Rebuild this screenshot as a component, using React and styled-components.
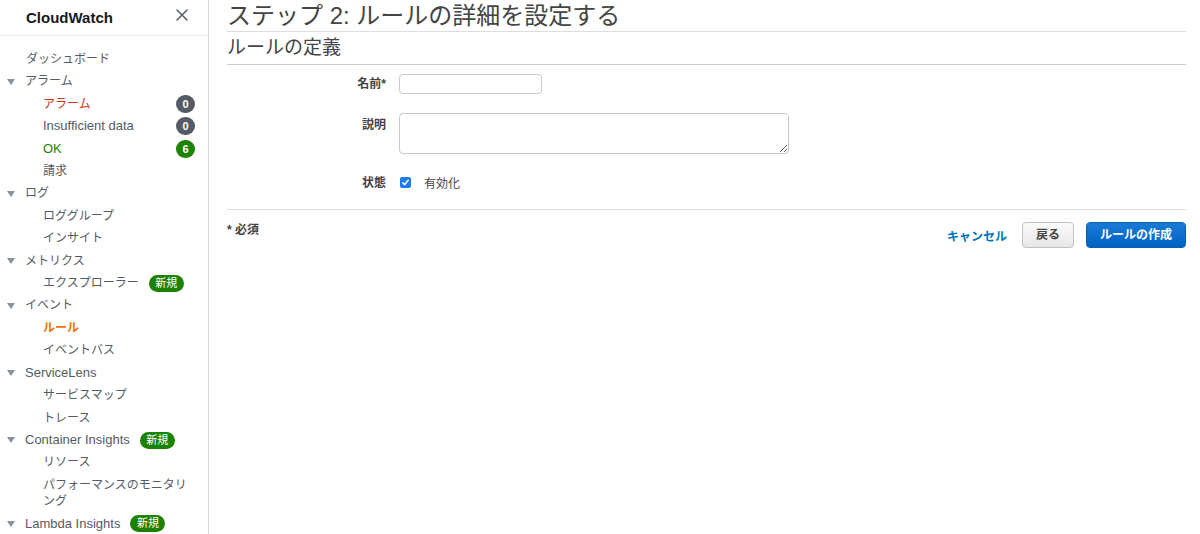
import styled, { createGlobalStyle } from "styled-components";

const GlobalStyle = createGlobalStyle`
  body {
    margin: 0;
    font-family: "Liberation Sans", "Noto Sans CJK JP", sans-serif;
    background: #fff;
  }
  * { box-sizing: border-box; }
`;

const tones = {
    default: "#545b64",
    red: "#d13212",
    green: "#1d8102",
    orange: "#ec7211",
};

const navItems = [
    { label: "ダッシュボード", indent: 26 },
    { label: "アラーム", group: true },
    { label: "アラーム", indent: 43, tone: "red", count: 0 },
    { label: "Insufficient data", indent: 43, latin: true, count: 0 },
    { label: "OK", indent: 43, latin: true, tone: "green", count: 6, countTone: "green" },
    { label: "請求", indent: 43 },
    { label: "ログ", group: true },
    { label: "ロググループ", indent: 43 },
    { label: "インサイト", indent: 43 },
    { label: "メトリクス", group: true },
    { label: "エクスプローラー", indent: 43, isNew: true },
    { label: "イベント", group: true },
    { label: "ルール", indent: 43, tone: "orange", bold: true },
    { label: "イベントバス", indent: 43 },
    { label: "ServiceLens", group: true, latin: true },
    { label: "サービスマップ", indent: 43 },
    { label: "トレース", indent: 43 },
    { label: "Container Insights", group: true, latin: true, isNew: true },
    { label: "リソース", indent: 43 },
    { label: "パフォーマンスのモニタリング", indent: 43 },
    { label: "Lambda Insights", group: true, latin: true, isNew: true },
];

function CloseIcon () {
    return (
        <svg width="12" height="12" viewBox="0 0 12 12">
            <path d="M1 1 L11 11 M11 1 L1 11" stroke="#545b64" strokeWidth="1.5" strokeLinecap="round" />
        </svg>
    );
}

function CheckIcon () {
    return (
        <svg width="9" height="9" viewBox="0 0 9 9">
            <path d="M1.8 4.8 L3.7 6.6 L7.2 2.3" stroke="#fff" strokeWidth="1.5" fill="none" strokeLinecap="round" strokeLinejoin="round" />
        </svg>
    );
}

function App () {
    return (
        <Layout>
            <GlobalStyle />
            <Sidebar>
                <SidebarHeader>
                    <Brand>CloudWatch</Brand>
                    <CloseButton><CloseIcon /></CloseButton>
                </SidebarHeader>
                <NavList>
                    { navItems.map( ( item, i ) => (
                        <NavRow key={ i } $indent={ item.group ? 7 : item.indent }>
                            { item.group && <Caret /> }
                            <NavLabel
                                $tone={ item.tone || "default" }
                                $latin={ item.latin }
                                $bold={ item.bold }
                            >
                                { item.label }
                            </NavLabel>
                            { item.isNew && <NewBadge>新規</NewBadge> }
                            { item.count !== undefined && (
                                <CountBadge $tone={ item.countTone || "dark" }>{ item.count }</CountBadge>
                            ) }
                        </NavRow>
                    ) ) }
                </NavList>
            </Sidebar>

            <Main>
                <Title>ステップ 2: ルールの詳細を設定する</Title>
                <SectionTitle>ルールの定義</SectionTitle>
                <Form>
                    <Label $align="center">名前*</Label>
                    <TextInput type="text" />

                    <Label $align="start" $offset={ 4 }>説明</Label>
                    <TextArea />

                    <Label $align="center">状態</Label>
                    <CheckRow>
                        <CheckBox><CheckIcon /></CheckBox>
                        <span>有効化</span>
                    </CheckRow>
                </Form>
                <Footer>
                    <Required>* 必須</Required>
                    <Actions>
                        <LinkButton>キャンセル</LinkButton>
                        <Button>戻る</Button>
                        <Button $primary>ルールの作成</Button>
                    </Actions>
                </Footer>
            </Main>
        </Layout>
    );
}

const Layout = styled.div`
  display: flex;
  height: 100vh;
  overflow: hidden;
`;

const Sidebar = styled.nav`
  width: 209px;
  flex-shrink: 0;
  border-right: 1px solid #d5dbdb;
  overflow: hidden;
`;

const SidebarHeader = styled.div`
  height: 36px;
  border-bottom: 1px solid #eaeded;
  display: flex;
  align-items: center;
  justify-content: space-between;
  padding: 0 20px 0 26px;
`;

const Brand = styled.div`
  font-size: 15px;
  font-weight: bold;
  color: #16191f;
`;

const CloseButton = styled.span`
  display: flex;
  margin-bottom: 5px;
`;

const NavList = styled.div`
  padding-top: 12px;
  padding-right: 13px;
`;

const NavRow = styled.div`
  display: flex;
  align-items: center;
  padding: 3px 0 3px ${ ( p ) => p.$indent }px;
  line-height: 16.4px;
`;

const Caret = styled.span`
  width: 0;
  height: 0;
  border-left: 4.5px solid transparent;
  border-right: 4.5px solid transparent;
  border-top: 6px solid #879196;
  margin-right: 10px;
  flex-shrink: 0;
`;

const NavLabel = styled.span`
  font-size: ${ ( p ) => ( p.$latin ? "13px" : "12px" ) };
  font-weight: ${ ( p ) => ( p.$bold ? "bold" : "normal" ) };
  color: ${ ( p ) => tones[ p.$tone ] };
`;

const NewBadge = styled.span`
  margin: -1px 0 -1px 10px;
  width: 35px;
  height: 17px;
  border-radius: 9px;
  background: #1d8102;
  color: #fff;
  font-size: 11px;
  line-height: 17px;
  text-align: center;
  flex-shrink: 0;
`;

const CountBadge = styled.span`
  margin: -1px 0 -1px auto;
  width: 19px;
  height: 18px;
  border-radius: 9px;
  background: ${ ( p ) => ( p.$tone === "green" ? "#1d8102" : "#545b64" ) };
  color: #fff;
  font-size: 11px;
  font-weight: bold;
  line-height: 18px;
  text-align: center;
`;

const Main = styled.main`
  flex: 1;
  padding: 0 14px 0 18px;
  color: #444;
`;

const Title = styled.h1`
  margin: 0;
  font-size: 24px;
  font-weight: normal;
  line-height: 31px;
  color: #444;
  border-bottom: 1px solid #dddddd;
`;

const SectionTitle = styled.h2`
  margin: 0;
  font-size: 19px;
  font-weight: normal;
  line-height: 32px;
  color: #444;
  border-bottom: 1px solid #cccccc;
`;

const Form = styled.div`
  display: grid;
  grid-template-columns: 159px 1fr;
  grid-template-rows: 20px 41px 20px;
  column-gap: 13px;
  row-gap: 19px;
  padding: 9px 0 16px;
`;

const Label = styled.div`
  font-size: 12px;
  font-weight: bold;
  color: #444;
  text-align: right;
  line-height: 16px;
  align-self: ${ ( p ) => p.$align };
  padding-top: ${ ( p ) => p.$offset || 0 }px;
`;

const TextInput = styled.input`
  width: 143px;
  height: 20px;
  border: 1px solid #c8c8c8;
  border-radius: 4px;
  padding: 0 5px;
  font-size: 12px;
  outline: none;
`;

const TextArea = styled.textarea`
  width: 390px;
  height: 41px;
  border: 1px solid #c8c8c8;
  border-radius: 4px;
  font-size: 12px;
  outline: none;
`;

const CheckRow = styled.div`
  display: flex;
  align-items: center;
  gap: 13px;
  padding-left: 1px;
  margin-top: -1px;
  font-size: 12px;
  color: #444;
`;

const CheckBox = styled.span`
  width: 11px;
  height: 11px;
  border-radius: 2px;
  background: #1f7bf2;
  display: flex;
  align-items: center;
  justify-content: center;
`;

const Footer = styled.div`
  border-top: 1px solid #dddddd;
  padding-top: 12px;
  display: flex;
  justify-content: space-between;
  align-items: flex-start;
`;

const Required = styled.div`
  font-size: 12px;
  font-weight: bold;
  line-height: 16px;
  color: #444;
`;

const Actions = styled.div`
  display: flex;
  align-items: center;
  gap: 12px;
`;

const LinkButton = styled.span`
  font-size: 12px;
  font-weight: bold;
  color: #0073bb;
  margin-right: 3px;
`;

const Button = styled.button`
  height: 26px;
  padding: 0 13px;
  border-radius: 4px;
  font-family: inherit;
  font-size: 12px;
  font-weight: bold;
  line-height: 24px;
  border: 1px solid ${ ( p ) => ( p.$primary ? "#0b5fb3" : "#c2c2c2" ) };
  color: ${ ( p ) => ( p.$primary ? "#fff" : "#444" ) };
  background: ${ ( p ) => ( p.$primary
        ? "linear-gradient(#1a7bd6, #0062c2)"
        : "linear-gradient(#fbfbfb, #e6e6e6)" ) };
`;

export default App;
